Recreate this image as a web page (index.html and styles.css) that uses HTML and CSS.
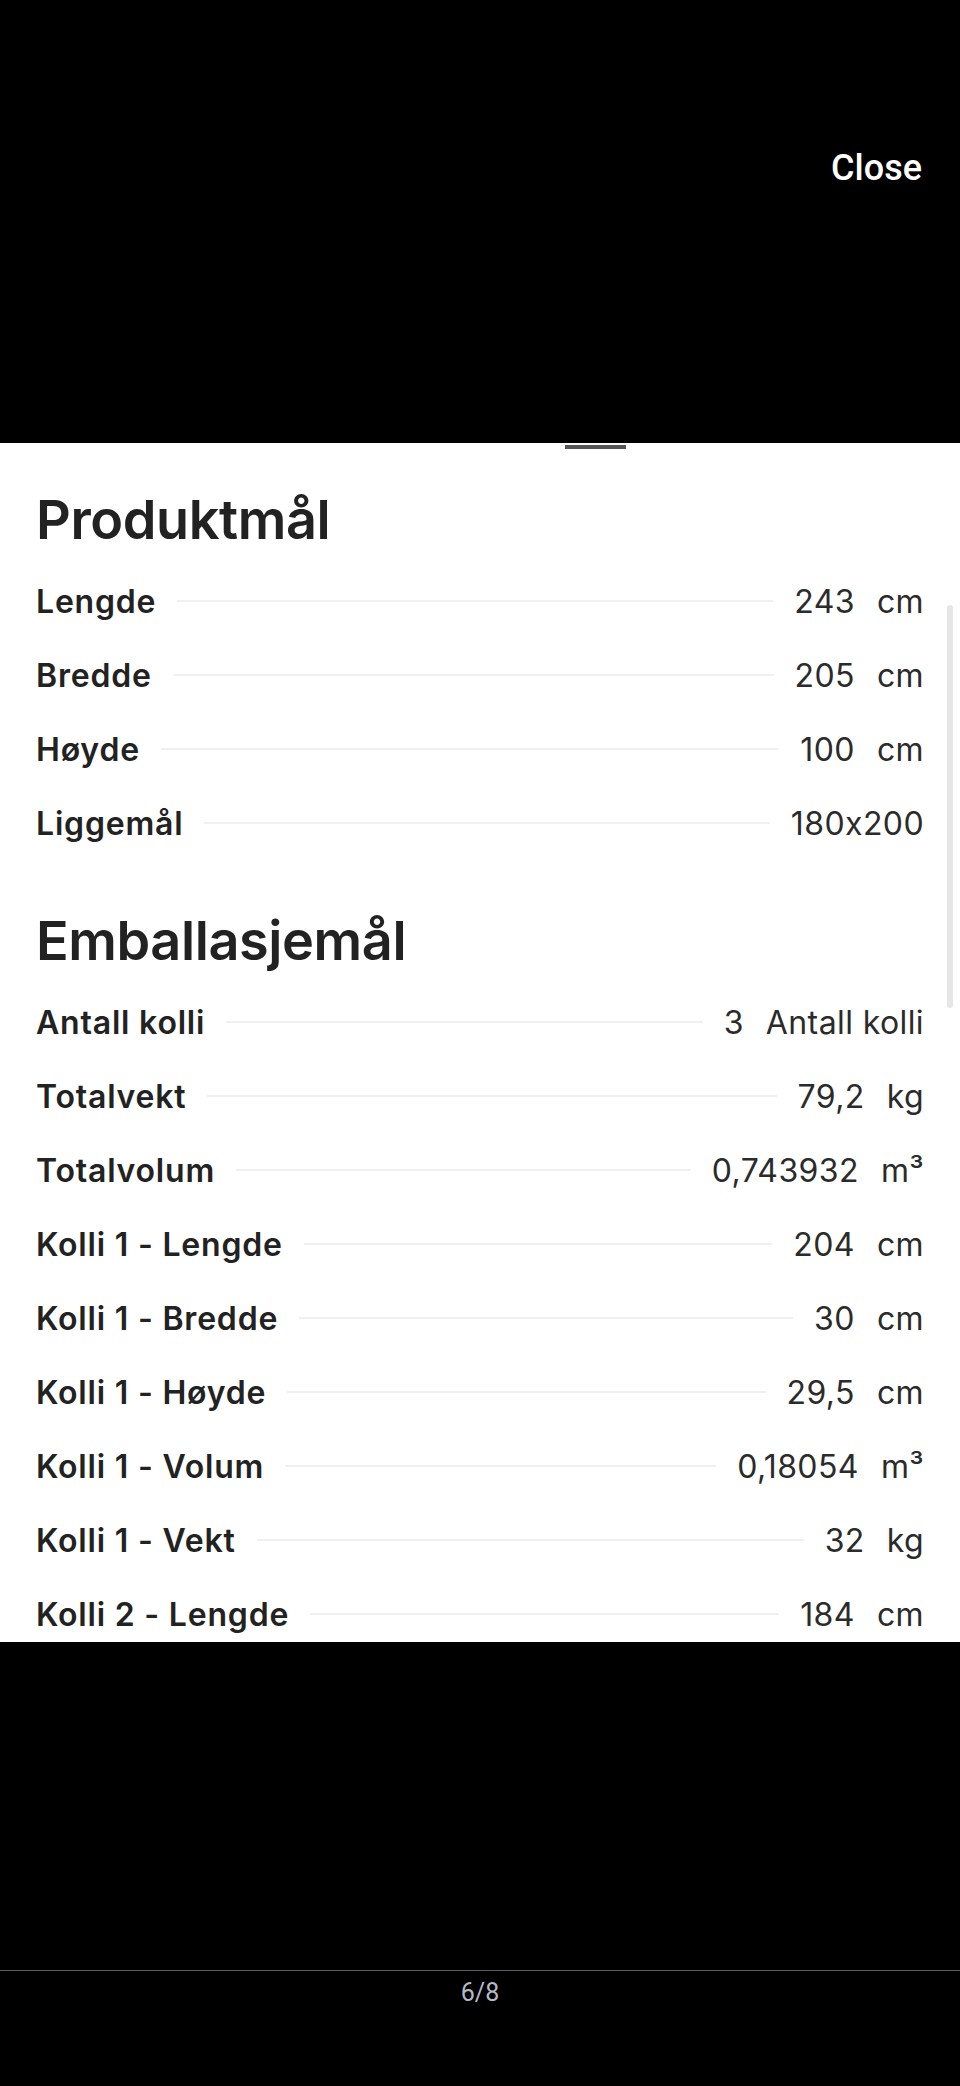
FILE: index.html
```html
<!DOCTYPE html>
<html lang="no">
<head>
  <meta charset="UTF-8">
  <title>Produktmål</title>
  <meta name="viewport" content="width=device-width, initial-scale=1">
  <link rel="stylesheet" href="styles.css">
</head>
<body>
  <!-- Top bar with close button -->
  <div class="top">
    <a class="close" href="#">Close</a>
  </div>

  <!-- Sheet with dimensions -->
  <div class="sheet">
    <div class="handle"></div>
    <div class="scroll-thumb"></div>

    <h2>Produktmål</h2>
    <div class="row"><span class="label">Lengde</span><span class="line"></span><span class="value">243</span><span class="unit">cm</span></div>
    <div class="row"><span class="label">Bredde</span><span class="line"></span><span class="value">205</span><span class="unit">cm</span></div>
    <div class="row"><span class="label">Høyde</span><span class="line"></span><span class="value">100</span><span class="unit">cm</span></div>
    <div class="row"><span class="label">Liggemål</span><span class="line"></span><span class="value">180x200</span></div>

    <h2 class="second">Emballasjemål</h2>
    <div class="row"><span class="label">Antall kolli</span><span class="line"></span><span class="value">3</span><span class="unit">Antall kolli</span></div>
    <div class="row"><span class="label">Totalvekt</span><span class="line"></span><span class="value">79,2</span><span class="unit">kg</span></div>
    <div class="row"><span class="label">Totalvolum</span><span class="line"></span><span class="value">0,743932</span><span class="unit">m³</span></div>
    <div class="row"><span class="label">Kolli 1 - Lengde</span><span class="line"></span><span class="value">204</span><span class="unit">cm</span></div>
    <div class="row"><span class="label">Kolli 1 - Bredde</span><span class="line"></span><span class="value">30</span><span class="unit">cm</span></div>
    <div class="row"><span class="label">Kolli 1 - Høyde</span><span class="line"></span><span class="value">29,5</span><span class="unit">cm</span></div>
    <div class="row"><span class="label">Kolli 1 - Volum</span><span class="line"></span><span class="value">0,18054</span><span class="unit">m³</span></div>
    <div class="row"><span class="label">Kolli 1 - Vekt</span><span class="line"></span><span class="value">32</span><span class="unit">kg</span></div>
    <div class="row"><span class="label">Kolli 2 - Lengde</span><span class="line"></span><span class="value">184</span><span class="unit">cm</span></div>
  </div>

  <!-- Bottom counter -->
  <div class="bottom">
    <div class="counter">6/8</div>
  </div>
</body>
</html>
```

FILE: styles.css
```css
/* Global Styles */
body {
  margin: 0;
  padding: 0;
  background-color: #000;
  font-family: Inter, "Noto Sans", sans-serif;
  color: #222;
}
/* Top bar */
.top {
  height: 443px;
  display: flex;
  justify-content: flex-end;
  align-items: flex-start;
  box-sizing: border-box;
  padding: 148px 38px 0 0;
}
.close {
  font-family: Roboto, sans-serif;
  font-weight: 500;
  font-size: 36px;
  line-height: 41px;
  color: #fff;
  text-decoration: none;
}
/* Sheet */
.sheet {
  position: relative;
  height: 1199px;
  overflow: hidden;
  background-color: #fff;
  padding: 0 36px 0 36px;
}
.handle {
  width: 61px;
  height: 4px;
  margin: 2px 0 0 529px;
  background-color: #555;
}
.scroll-thumb {
  position: absolute;
  top: 162px;
  left: 947px;
  width: 6px;
  height: 403px;
  border-radius: 3px;
  background-color: #e6e6e6;
}
h2 {
  margin: 38px 0 11px 0;
  font-size: 54px;
  font-weight: 600;
  line-height: 66px;
  letter-spacing: -0.4px;
  color: #222;
}
h2.second {
  margin-top: 48px;
}
.row {
  display: flex;
  align-items: center;
  height: 74px;
  font-size: 32px;
}
.label {
  font-weight: 600;
  letter-spacing: 0.8px;
  white-space: nowrap;
}
.line {
  flex: 1;
  height: 2px;
  margin: 0 21px;
  background-color: #f0f0f0;
}
.value,
.unit {
  font-weight: 400;
  letter-spacing: 0.4px;
  color: #2b2b2b;
  white-space: nowrap;
}
.unit {
  margin-left: 22px;
}
/* Bottom */
.bottom {
  height: 444px;
  box-sizing: border-box;
  padding-top: 328px;
}
.counter {
  border-top: 1px solid #5a5a5e;
  padding-top: 7px;
  text-align: center;
  font-family: Roboto, sans-serif;
  font-size: 25px;
  line-height: 29px;
  color: #b5bac8;
}
```
